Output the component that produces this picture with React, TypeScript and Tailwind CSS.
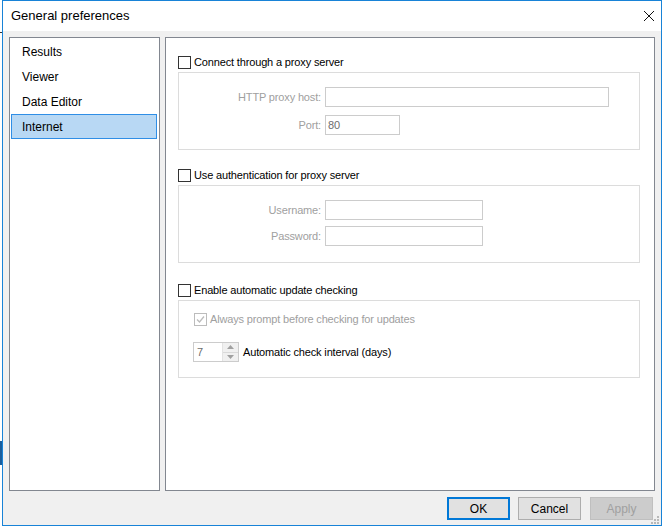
import React from 'react'

const ui = { fontFamily: '"Liberation Sans", Arial, sans-serif' }

function Check({ checked, disabled }: { checked?: boolean; disabled?: boolean }) {
  return (
    <div
      className={`w-[13px] h-[13px] shrink-0 border bg-white flex items-center justify-center ${
        disabled ? 'border-[#bcbcbc]' : 'border-[#333333]'
      }`}
    >
      {checked && (
        <svg width="9" height="9" viewBox="0 0 9 9">
          <path d="M1 4.5 L3.5 7 L8 1.5" fill="none" stroke={disabled ? '#bcbcbc' : '#333'} strokeWidth="1.3" />
        </svg>
      )}
    </div>
  )
}

function Field({ label, width, value }: { label: string; width: string; value?: string }) {
  return (
    <div className="flex items-center h-[20px]">
      <span className="w-[142px] mr-[4px] text-right text-[11px] tracking-[-0.15px] text-[#a0a0a0]">{label}</span>
      <div className={`${width} h-[20px] border border-[#cccccc] bg-white flex items-center pl-[2px] text-[11px] text-[#6d6d6d]`}>
        {value}
      </div>
    </div>
  )
}

function Section({ title, children, className = '' }: { title: string; children: React.ReactNode; className?: string }) {
  return (
    <div className={className}>
      <div className="flex items-center h-[13px] gap-[3px] text-[11px] tracking-[-0.15px] text-black">
        <Check />
        <span>{title}</span>
      </div>
      <div className="mt-[3px] w-[462px] h-[78px] border border-[#dcdcdc]">{children}</div>
    </div>
  )
}

export default function App() {
  const items = ['Results', 'Viewer', 'Data Editor', 'Internet']
  return (
    <div className="w-[662px] h-[526px] flex bg-white overflow-hidden" style={ui}>
      {/* bit of the window behind */}
      <div className="w-[2px] flex flex-col">
        <div className="h-[32px] bg-white" />
        <div className="h-[1px] bg-[#333]" />
        <div className="h-[408px] bg-white" />
        <div className="h-[24px] bg-[#1a5e9c]" />
        <div className="flex-1 bg-white" />
      </div>

      <div className="flex-1 flex flex-col border border-[#1883d7]">
        {/* Title bar */}
        <div className="h-[30px] bg-white flex items-center pl-[8px] pr-[5px]">
          <span className="text-[13px] text-black">General preferences</span>
          <svg className="ml-auto mr-[1px]" width="12" height="12" viewBox="0 0 12 12">
            <path d="M1 1 L11 11 M11 1 L1 11" stroke="#111" strokeWidth="1" />
          </svg>
        </div>

        {/* Body */}
        <div className="flex-1 bg-[#f0f0f0] pt-[6px] pl-[6px] pr-[6px] flex flex-col">
          <div className="flex h-[454px] gap-[5px]">
            {/* Page list */}
            <div className="w-[151px] border border-[#828790] bg-white pt-[1px] pl-[1px] pr-[2px]">
              {items.map(it => (
                <div
                  key={it}
                  className={`h-[25px] flex items-center pl-[10px] text-[12px] text-black border ${
                    it === 'Internet' ? 'bg-[#b8d8f4] border-[#2f8ee6]' : 'border-transparent'
                  }`}
                >
                  {it}
                </div>
              ))}
            </div>

            {/* Page */}
            <div className="w-[490px] border border-[#828790] bg-white pt-[18px] pl-[12px]">
              <Section title="Connect through a proxy server">
                <div className="pt-[14px] flex flex-col gap-[8px]">
                  <Field label="HTTP proxy host:" width="w-[284px]" />
                  <Field label="Port:" width="w-[75px]" value="80" />
                </div>
              </Section>

              <Section title="Use authentication for proxy server" className="mt-[19px]">
                <div className="pt-[14px] flex flex-col gap-[6px]">
                  <Field label="Username:" width="w-[158px]" />
                  <Field label="Password:" width="w-[158px]" />
                </div>
              </Section>

              <Section title="Enable automatic update checking" className="mt-[21px]">
                <div className="pt-[12px] pl-[15px]">
                  <div className="flex items-center h-[13px] gap-[3px] text-[11px] tracking-[-0.15px] text-[#a0a0a0]">
                    <Check checked disabled />
                    <span>Always prompt before checking for updates</span>
                  </div>
                  <div className="mt-[16px] -ml-[1px] flex items-center gap-[4px]">
                    <div className="w-[46px] h-[20px] border border-[#cccccc] bg-white flex">
                      <span className="flex-1 pl-[3px] text-[11px] text-[#6d6d6d] leading-[18px]">7</span>
                      <div className="w-[16px] flex flex-col border-l border-[#e3e3e3]">
                        <div className="flex-1 bg-[#f0f0f0] flex items-center justify-center border-b border-[#d9d9d9]">
                          <svg width="7" height="4" viewBox="0 0 7 4"><path d="M0 4 L3.5 0 L7 4 Z" fill="#a0a0a0" /></svg>
                        </div>
                        <div className="flex-1 bg-[#f0f0f0] flex items-center justify-center">
                          <svg width="7" height="4" viewBox="0 0 7 4"><path d="M0 0 L3.5 4 L7 0 Z" fill="#a0a0a0" /></svg>
                        </div>
                      </div>
                    </div>
                    <span className="text-[11px] tracking-[-0.15px] text-black">Automatic check interval (days)</span>
                  </div>
                </div>
              </Section>
            </div>
          </div>

          {/* Buttons */}
          <div className="mt-[6px] flex justify-end pr-[2px] relative">
            <button className="w-[63px] h-[23px] border-2 border-[#0078d7] bg-[#e1e1e1] text-[12px] text-black">OK</button>
            <button className="ml-[8px] w-[63px] h-[23px] border border-[#adadad] bg-[#e1e1e1] text-[12px] text-black">Cancel</button>
            <button className="ml-[9px] w-[63px] h-[23px] border border-[#bfbfbf] bg-[#cccccc] text-[12px] text-[#a0a0a0]">Apply</button>
          </div>
          <div className="flex-1 relative">
            <svg className="absolute right-[-5px] bottom-[0px]" width="10" height="10" viewBox="0 0 10 10">
              <g fill="#b8b8b8">
                <rect x="7" y="1" width="2" height="2" />
                <rect x="4" y="4" width="2" height="2" />
                <rect x="7" y="4" width="2" height="2" />
                <rect x="1" y="7" width="2" height="2" />
                <rect x="4" y="7" width="2" height="2" />
                <rect x="7" y="7" width="2" height="2" />
              </g>
            </svg>
          </div>
        </div>
      </div>
    </div>
  )
}
